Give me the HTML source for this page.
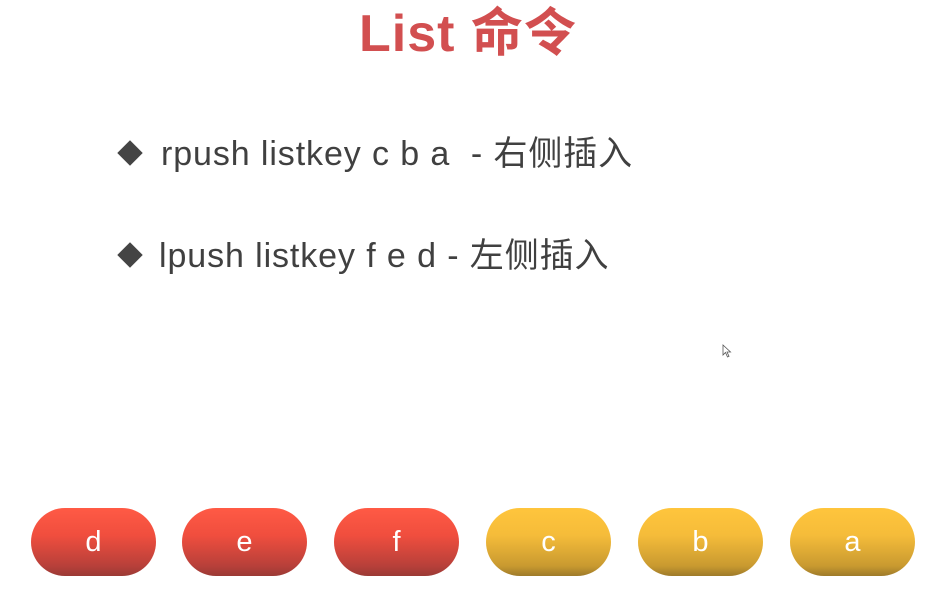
<!DOCTYPE html>
<html><head><meta charset="utf-8"><style>
html,body{margin:0;padding:0;background:#fff;width:942px;height:598px;overflow:hidden;position:relative}
.t{position:absolute;font-family:"Liberation Sans","Noto Sans CJK SC",sans-serif;white-space:nowrap}
.title{left:359px;top:2px;font-size:52px;font-weight:bold;color:#d24f50;line-height:64px;letter-spacing:1px}
.line{font-size:34px;color:#404040;line-height:40px;letter-spacing:0.9px}
.dia{position:absolute;width:18px;height:18px;background:#444;transform:rotate(45deg)}
.pill{position:absolute;top:508px;width:125px;height:68px;border-radius:34px;color:#fff;font-family:"Liberation Sans",sans-serif;font-size:29px;text-align:center;line-height:68px}
.r{background:linear-gradient(#ff5a45 0%,#f04e3e 40%,#b8403a 85%,#9a3a35 100%)}
.y{background:linear-gradient(#ffc53c 0%,#f5bc3a 40%,#c99a30 85%,#9e7a2a 100%)}
</style></head><body>
<div class="t title">List 命令</div>
<div class="dia" style="left:121px;top:144px"></div>
<div class="t line" style="left:161px;top:134px">rpush listkey c b a&nbsp; - 右侧插入</div>
<div class="dia" style="left:121px;top:246px"></div>
<div class="t line" style="left:159px;top:236px">lpush listkey f e d - 左侧插入</div>
<svg style="position:absolute;left:722px;top:344px" width="10" height="14" viewBox="0 0 10 14"><path d="M1 1 L1 11 L3.5 8.5 L5.5 13 L7 12.3 L5 8 L8.5 8 Z" fill="#fff" stroke="#555" stroke-width="0.8"/></svg>
<div class="pill r" style="left:31px">d</div>
<div class="pill r" style="left:182px">e</div>
<div class="pill r" style="left:334px">f</div>
<div class="pill y" style="left:486px">c</div>
<div class="pill y" style="left:638px">b</div>
<div class="pill y" style="left:790px">a</div>
</body></html>
